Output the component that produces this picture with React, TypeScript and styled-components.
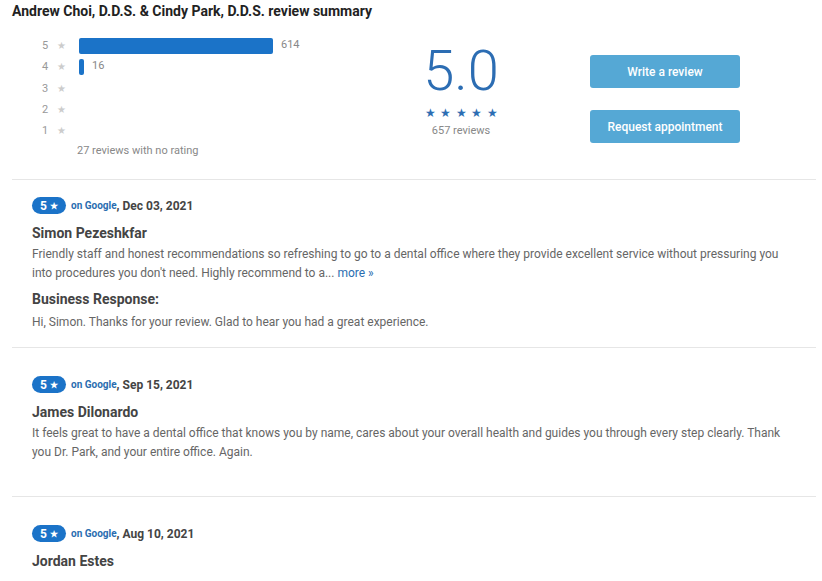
import React from 'react';
import styled, { createGlobalStyle } from 'styled-components';

const GlobalStyle = createGlobalStyle`
  body {
    margin: 0;
    background: #fff;
    font-family: Roboto, "Liberation Sans", Arial, sans-serif;
  }
`;

const Page = styled.div`
  padding: 2px 6px 0 12px;
`;

const Title = styled.h2`
  margin: 0;
  font-size: 14px;
  line-height: 18px;
  font-weight: 700;
  color: #222;
`;

const Summary = styled.div`
  display: flex;
  align-items: flex-start;
  padding: 15px 0 21px 30px;
  border-bottom: 1px solid #e6e6e6;
`;

const Histogram = styled.div`
  width: 369px;
`;

const HistRow = styled.div`
  display: flex;
  align-items: center;
  height: 21.3px;
`;

const StarLabel = styled.span`
  width: 15px;
  font-size: 11px;
  color: #999;
`;

const GreyStar = styled.span`
  width: 22px;
  font-size: 10px;
  color: #ccc;
`;

const Bar = styled.div<{ $w: number }>`
  width: ${(p) => p.$w}px;
  height: 16px;
  border-radius: 2px;
  background: #1b73c8;
`;

const Count = styled.span`
  margin: -2px 0 0 8px;
  font-size: 11px;
  color: #888;
`;

const NoRating = styled.div`
  margin: 3px 0 0 35px;
  font-size: 11px;
  line-height: 14px;
  color: #888;
`;

const RatingBlock = styled.div`
  width: 100px;
  display: flex;
  flex-direction: column;
  align-items: center;
`;

const BigScore = styled.div`
  margin-top: 4px;
  font-size: 56px;
  font-weight: 300;
  line-height: 64px;
  color: #2c6db3;
`;

const BlueStars = styled.div`
  margin-top: 3px;
  font-size: 12px;
  letter-spacing: 4.5px;
  color: #2c6db3;
  line-height: 14px;
  padding-left: 4.5px;
`;

const ReviewCount = styled.div`
  margin-top: 4px;
  font-size: 11px;
  line-height: 14px;
  color: #888;
`;

const Buttons = styled.div`
  margin-left: 79px;
  padding-top: 20px;
  display: flex;
  flex-direction: column;
  gap: 22px;
`;

const Button = styled.button`
  width: 150px;
  height: 33px;
  border: none;
  border-radius: 3px;
  background: #55a8d5;
  color: #fff;
  font-family: inherit;
  font-size: 12px;
  font-weight: 500;
  cursor: pointer;
`;

const Review = styled.div<{ $top: number; $bottom: number; $last?: boolean }>`
  padding: ${(p) => p.$top}px 24px ${(p) => p.$bottom}px 20px;
  border-bottom: ${(p) => (p.$last ? 'none' : '1px solid #e6e6e6')};
`;

const ReviewHead = styled.div`
  display: flex;
  align-items: center;
  height: 17px;
`;

const Badge = styled.span`
  display: inline-flex;
  align-items: center;
  justify-content: center;
  width: 34px;
  height: 17px;
  border-radius: 9px;
  background: #1b73c8;
  color: #fff;
  font-size: 12px;
  font-weight: 700;
  gap: 3px;

  small {
    font-size: 9px;
  }
`;

const Source = styled.span`
  margin-left: 5px;
  font-size: 10px;
  font-weight: 700;
  color: #2a6db0;
`;

const Date = styled.span`
  font-size: 12px;
  font-weight: 700;
  color: #444;
`;

const Name = styled.div`
  margin-top: 10px;
  font-size: 14px;
  line-height: 18px;
  font-weight: 700;
  color: #444;
`;

const Body = styled.p<{ $gap: number }>`
  margin: ${(p) => p.$gap}px 0 0;
  font-size: 12px;
  line-height: 19px;
  color: #666;
`;

const More = styled.a`
  color: #2a6db0;
  text-decoration: none;
`;

const ResponseTitle = styled.div`
  margin-top: 7px;
  font-size: 14px;
  line-height: 18px;
  font-weight: 700;
  color: #444;
`;

const rows = [
  { stars: 5, count: 614 },
  { stars: 4, count: 16 },
  { stars: 3, count: 0 },
  { stars: 2, count: 0 },
  { stars: 1, count: 0 },
];

const ReviewHeader = ({ date }: { date: string }) => (
  <ReviewHead>
    <Badge>
      5 <small>★</small>
    </Badge>
    <Source>on Google</Source>
    <Date>, {date}</Date>
  </ReviewHead>
);

export default function App() {
  return (
    <Page>
      <GlobalStyle />
      <Title>Andrew Choi, D.D.S. &amp; Cindy Park, D.D.S. review summary</Title>
      <Summary>
        <Histogram>
          {rows.map((r) => (
            <HistRow key={r.stars}>
              <StarLabel>{r.stars}</StarLabel>
              <GreyStar>★</GreyStar>
              {r.count > 0 && (
                <>
                  <Bar $w={Math.max(5, Math.round((r.count / 614) * 194))} />
                  <Count>{r.count}</Count>
                </>
              )}
            </HistRow>
          ))}
          <NoRating>27 reviews with no rating</NoRating>
        </Histogram>
        <RatingBlock>
          <BigScore>5.0</BigScore>
          <BlueStars>★★★★★</BlueStars>
          <ReviewCount>657 reviews</ReviewCount>
        </RatingBlock>
        <Buttons>
          <Button>Write a review</Button>
          <Button>Request appointment</Button>
        </Buttons>
      </Summary>

      <Review $top={17} $bottom={15}>
        <ReviewHeader date="Dec 03, 2021" />
        <Name>Simon Pezeshkfar</Name>
        <Body $gap={3}>
          Friendly staff and honest recommendations so refreshing to go to a dental office where they
          provide excellent service without pressuring you into procedures you don't need. Highly
          recommend to a... <More href="#">more »</More>
        </Body>
        <ResponseTitle>Business Response:</ResponseTitle>
        <Body $gap={5}>Hi, Simon. Thanks for your review. Glad to hear you had a great experience.</Body>
      </Review>

      <Review $top={28} $bottom={34}>
        <ReviewHeader date="Sep 15, 2021" />
        <Name>James Dilonardo</Name>
        <Body $gap={3}>
          It feels great to have a dental office that knows you by name, cares about your overall
          health and guides you through every step clearly. Thank you Dr. Park, and your entire
          office. Again.
        </Body>
      </Review>

      <Review $top={28} $bottom={20} $last>
        <ReviewHeader date="Aug 10, 2021" />
        <Name>Jordan Estes</Name>
      </Review>
    </Page>
  );
}
